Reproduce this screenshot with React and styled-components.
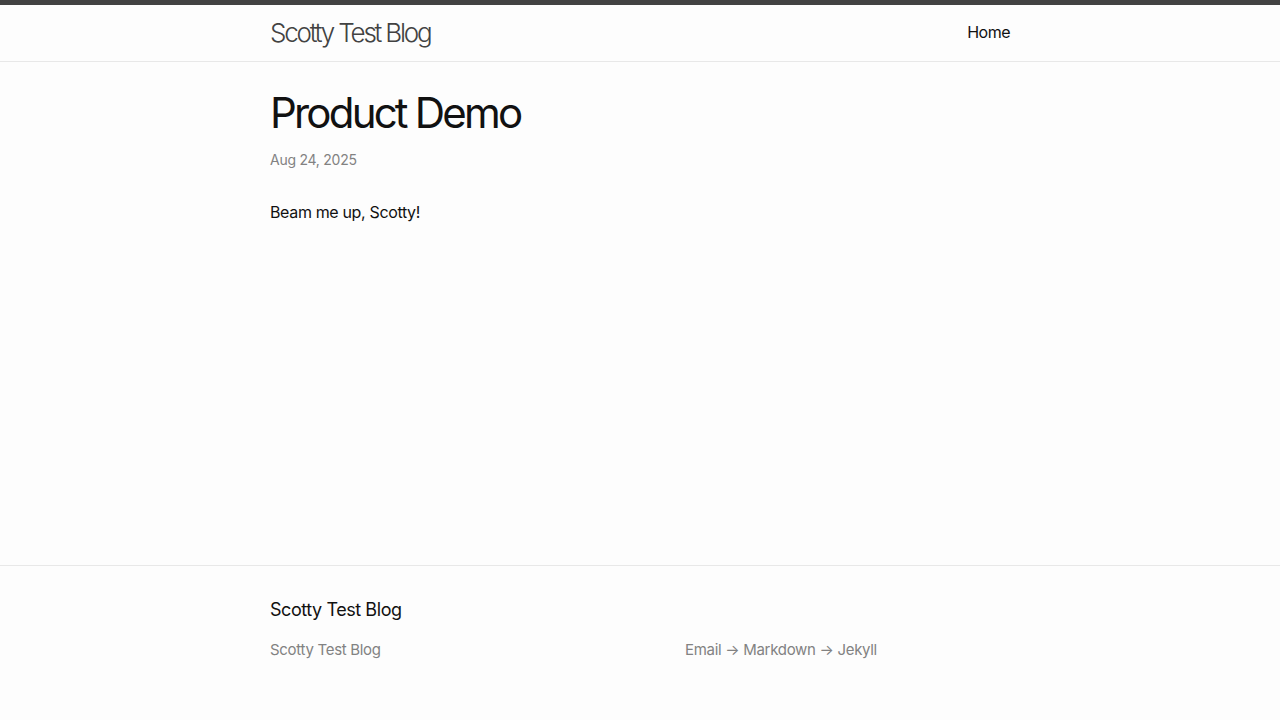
import React from 'react'
import styled, { createGlobalStyle } from 'styled-components'

const GlobalStyle = createGlobalStyle`
  html, body {
    margin: 0;
    padding: 0;
  }
  body {
    font-family: Inter, "Noto Sans", "Liberation Sans", sans-serif;
    font-size: 16px;
    line-height: 1.5;
    letter-spacing: -0.35px;
    color: #111;
    background: #fdfdfd;
  }
`

const Page = styled.div`
  min-height: 100vh;
  display: flex;
  flex-direction: column;
`

const Wrapper = styled.div`
  max-width: 740px;
  margin: 0 auto;
  padding: 0 30px;
`

const Header = styled.header`
  border-top: 5px solid #424242;
  border-bottom: 1px solid #e8e8e8;
  min-height: 56px;
`

const HeaderRow = styled(Wrapper)`
  display: flex;
  justify-content: space-between;
  align-items: flex-start;
`

const SiteTitle = styled.a`
  font-size: 26px;
  font-weight: 300;
  line-height: 56px;
  letter-spacing: -2.2px;
  color: #424242;
  text-decoration: none;
`

const NavLink = styled.a`
  line-height: 54px;
  letter-spacing: -0.5px;
  color: #111;
  text-decoration: none;
`

const Main = styled.main`
  flex: 1;
  padding: 30px 0;
`

const PostHeader = styled.header`
  margin-bottom: 30px;
`

const PostTitle = styled.h1`
  font-size: 42px;
  font-weight: 400;
  letter-spacing: -2.8px;
  line-height: 1;
  margin: 0 0 15px;
`

const PostMeta = styled.p`
  font-size: 14px;
  letter-spacing: -0.25px;
  color: #828282;
  margin: 0;
`

const Paragraph = styled.p`
  margin: 0 0 15px;
`

const Footer = styled.footer`
  border-top: 1px solid #e8e8e8;
  padding: 30px 0;
`

const FooterHeading = styled.h2`
  font-size: 18px;
  font-weight: 400;
  line-height: 1.5;
  letter-spacing: -0.44px;
  margin: 0 0 16px;
`

const FooterCols = styled.div`
  display: grid;
  grid-template-columns: 415px 1fr;
  font-size: 15px;
  letter-spacing: -0.3px;
  color: #828282;
`

const FooterCol = styled.div`
  margin-bottom: 15px;
`

const FooterList = styled.ul`
  list-style: none;
  margin: 0 0 14px;
  padding: 0;
`

export default function App() {
  return (
    <Page>
      <GlobalStyle />
      <Header>
        <HeaderRow>
          <SiteTitle href="#">Scotty Test Blog</SiteTitle>
          <nav>
            <NavLink href="#">Home</NavLink>
          </nav>
        </HeaderRow>
      </Header>
      <Main>
        <Wrapper>
          <article>
            <PostHeader>
              <PostTitle>Product Demo</PostTitle>
              <PostMeta>
                <time>Aug 24, 2025</time>
              </PostMeta>
            </PostHeader>
            <Paragraph>Beam me up, Scotty!</Paragraph>
          </article>
        </Wrapper>
      </Main>
      <Footer>
        <Wrapper>
          <FooterHeading>Scotty Test Blog</FooterHeading>
          <FooterCols>
            <FooterCol>
              <FooterList>
                <li>Scotty Test Blog</li>
              </FooterList>
            </FooterCol>
            <FooterCol>
              <FooterList>
                <li>Email → Markdown → Jekyll</li>
              </FooterList>
            </FooterCol>
          </FooterCols>
        </Wrapper>
      </Footer>
    </Page>
  )
}
